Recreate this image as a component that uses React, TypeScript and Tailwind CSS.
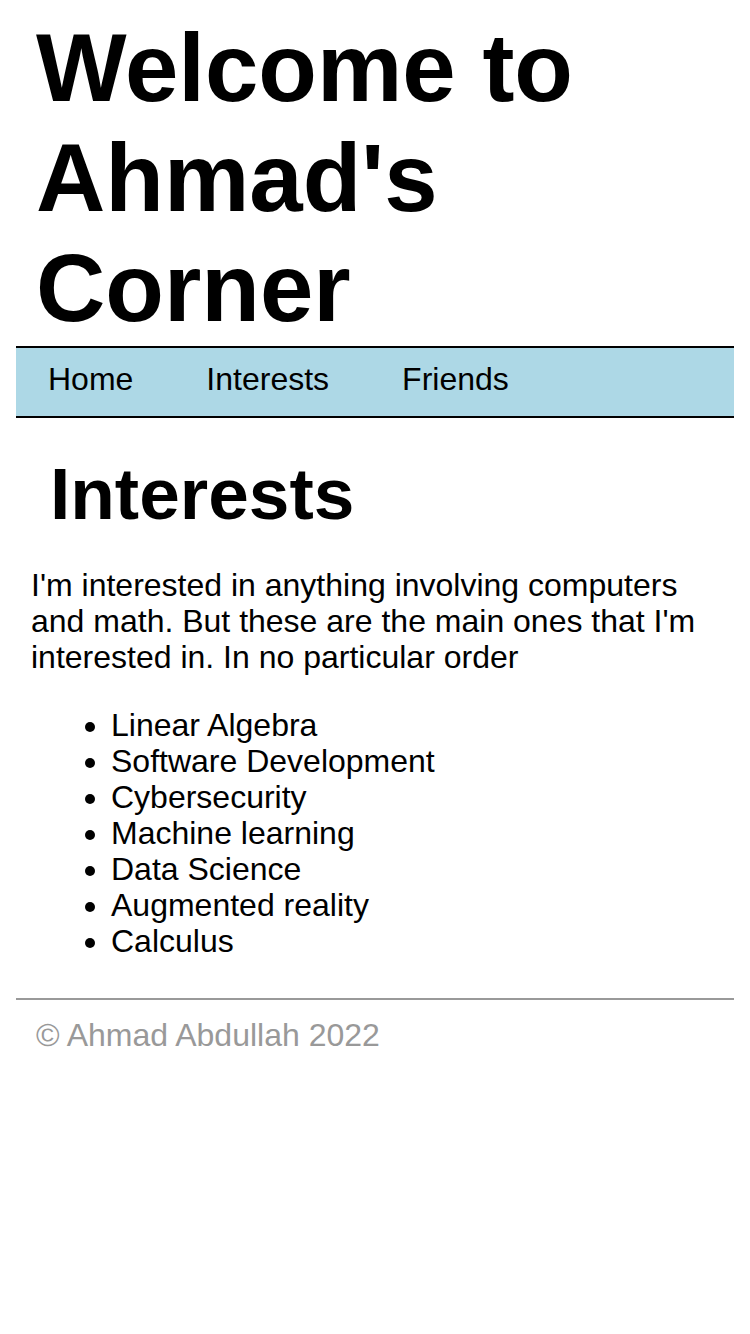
const interests = [
  "Linear Algebra",
  "Software Development",
  "Cybersecurity",
  "Machine learning",
  "Data Science",
  "Augmented reality",
  "Calculus",
];

export default function App() {
  return (
    <div className="mx-4 font-['Liberation_Sans',Arial,sans-serif] text-black">
      {/* Header */}
      <header className="pl-5 pt-[13px] pb-[3px]">
        <h1 className="text-[96px] font-bold leading-[110px]">Welcome to Ahmad's Corner</h1>
      </header>

      <nav className="flex gap-[73px] border-y-2 border-black bg-[#add8e6] pl-8 pt-[13px] pb-[19px] text-[32px] leading-9">
        <a href="#">Home</a>
        <a href="#">Interests</a>
        <a href="#">Friends</a>
      </nav>

      <main>
        <h2 className="mt-[35px] pl-[34px] text-[73px] font-bold leading-[82px]">Interests</h2>
        <p className="mt-[32px] px-[15px] text-[32px] leading-9">
          I'm interested in anything involving computers and math. But these are the main ones that I'm
          interested in. In no particular order
        </p>
        <ul className="mt-8 ml-[15px] list-disc pl-[80px] text-[32px] leading-9">
          {interests.map((item) => (
            <li key={item}>{item}</li>
          ))}
        </ul>
      </main>

      <footer className="mt-[39px] border-t-2 border-[#999999] pt-[17px] pl-5 text-[32px] leading-9 text-[#999999]">
        © Ahmad Abdullah 2022
      </footer>
    </div>
  );
}
